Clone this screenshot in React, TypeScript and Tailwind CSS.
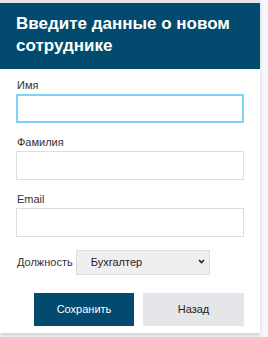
import { useState } from "react";

export default function App() {
  const [name, setName] = useState("");
  const [surname, setSurname] = useState("");
  const [email, setEmail] = useState("");
  const [role, setRole] = useState("Бухгалтер");

  return (
    <div className="min-h-screen bg-[#f4f7fb] font-['Liberation_Sans',Arial,sans-serif]">
      <div className="w-[260px] border-t-[3px] border-[#e2e4e8] bg-white shadow-[0_3px_4px_rgba(0,0,0,0.15)] pb-[7px]">
        <div className="bg-[#024b6e] px-4 pt-[10px] pb-[12px]">
          <h1 className="text-[17px] font-bold leading-[22px] text-white">
            Введите данные о новом сотруднике
          </h1>
        </div>
        <form className="flex flex-col px-4 pt-[9px]" onSubmit={(e) => e.preventDefault()}>
          <label className="ml-[1px] text-[11px] leading-[14px] text-[#333]">Имя</label>
          <input
            autoFocus
            value={name}
            onChange={(e) => setName(e.target.value)}
            className="mt-[2px] h-[29px] w-[228px] border-2 border-[#7fd3f5] px-2 text-[12px] outline-none"
          />
          <label className="ml-[1px] mt-[12px] text-[11px] leading-[14px] text-[#333]">Фамилия</label>
          <input
            value={surname}
            onChange={(e) => setSurname(e.target.value)}
            className="mt-[2px] h-[29px] w-[228px] border border-[#ddd] px-2 text-[12px] outline-none"
          />
          <label className="ml-[1px] mt-[12px] text-[11px] leading-[14px] text-[#333]">Email</label>
          <input
            value={email}
            onChange={(e) => setEmail(e.target.value)}
            className="mt-[2px] h-[29px] w-[228px] border border-[#ddd] px-2 text-[12px] outline-none"
          />
          <div className="mt-[12px] flex items-center">
            <label className="ml-[1px] text-[11px] text-[#333]">Должность</label>
            <div className="relative ml-[3px]">
              <select
                value={role}
                onChange={(e) => setRole(e.target.value)}
                className="h-[25px] w-[134px] appearance-none border border-[#ddd] bg-[#efefef] pl-[14px] text-[11px] text-[#222] outline-none"
              >
                <option>Бухгалтер</option>
                <option>Менеджер</option>
                <option>Разработчик</option>
              </select>
              {/* стрелка селекта */}
              <svg
                className="pointer-events-none absolute right-[5px] top-[10px]"
                width="7"
                height="5"
                viewBox="0 0 7 5"
              >
                <path d="M1 1l2.5 2.5L6 1" fill="none" stroke="#222" strokeWidth="1.6" />
              </svg>
            </div>
          </div>
          <div className="mt-[18px] flex justify-end gap-[9px]">
            <button
              type="submit"
              className="h-[33px] w-[100px] bg-[#024b6e] text-[11px] text-white"
            >
              Сохранить
            </button>
            <button
              type="button"
              className="h-[33px] w-[101px] bg-[#e5e6ea] text-[11px] text-[#222]"
            >
              Назад
            </button>
          </div>
        </form>
      </div>
    </div>
  );
}
